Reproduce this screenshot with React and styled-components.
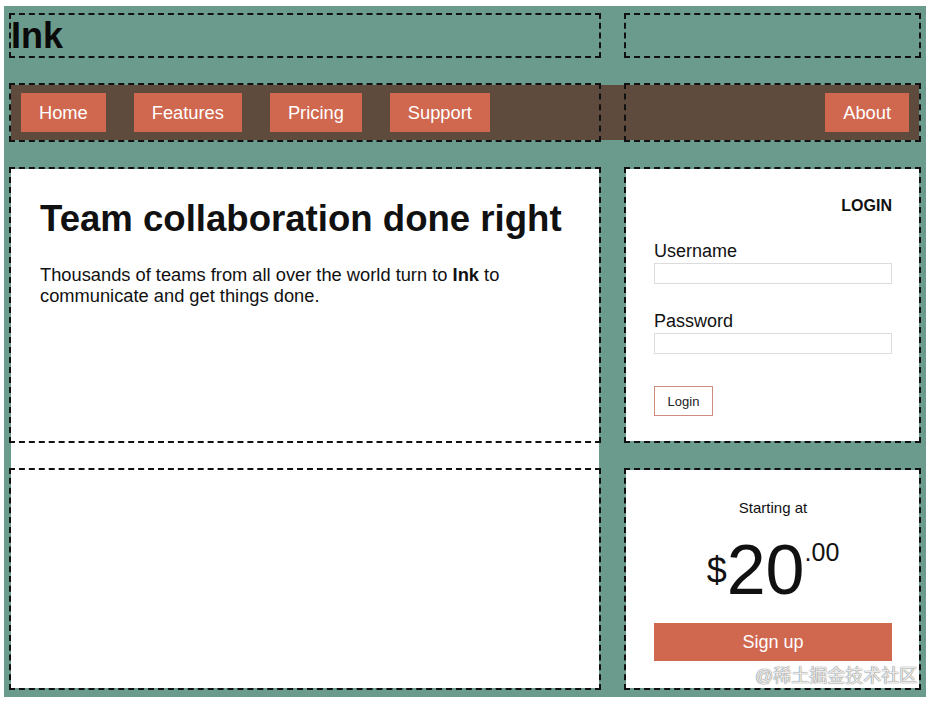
import styled, { createGlobalStyle } from 'styled-components'

const GlobalStyle = createGlobalStyle`
  html, body {
    margin: 0;
    padding: 0;
    background: #fff;
  }
  body {
    font-family: "Liberation Sans", Arial, Helvetica, sans-serif;
    color: #111;
  }
  * {
    box-sizing: border-box;
  }
`

const Page = styled.div`
  padding: 6px 8px 6px 4px;
`

const Layout = styled.div`
  position: relative;
  height: 691px;
  padding: 7px 5px;
  background: #6b9b8c;
  display: grid;
  grid-template-columns: 592px 297px;
  grid-template-rows: 45px 59px 276px 222px;
  column-gap: 23px;
  row-gap: 25px;
`

// dashed outline of every grid area, drawn over the content
const GridCell = styled.div`
  grid-row: ${props => props.$row};
  grid-column: ${props => props.$col};
  border: 2px dashed #111;
  z-index: 2;
  pointer-events: none;
`

const Brand = styled.header`
  grid-row: 1;
  grid-column: 1;
  margin: 2px;
  padding: 3px 0 0 0;
  font-size: 36px;
  font-weight: bold;
  line-height: 1;
  color: #0a0a0a;
`

const Nav = styled.nav`
  grid-row: 2;
  grid-column: 1 / -1;
  margin: 2px;
  padding: 0 10px;
  background: #5f4a3e;
  display: flex;
  align-items: center;
  gap: 28px;
`

const NavLink = styled.a`
  height: 39px;
  padding: 0 18px;
  display: flex;
  align-items: center;
  background: #d0674f;
  color: #fff;
  font-size: 18.3px;
  text-decoration: none;
  ${props => props.$end && 'margin-left: auto;'}
`

const Main = styled.main`
  grid-row: 3 / 5;
  grid-column: 1;
  margin: 2px;
  padding: 29px;
  background: #fff;
`

const Headline = styled.h1`
  margin: 0;
  font-size: 36.6px;
  line-height: 41px;
  font-weight: bold;
`

const Lead = styled.p`
  margin: 25px 0 0;
  font-size: 18.3px;
  line-height: 21px;
`

const Card = styled.section`
  grid-row: ${props => props.$row};
  grid-column: 2;
  margin: 2px;
  padding: 28px 27px 28px 28px;
  background: #fff;
  ${props => props.$center && 'text-align: center; padding-top: 29px;'}
`

const CardTitle = styled.h2`
  margin: 0;
  text-align: right;
  font-size: 16px;
  line-height: 18px;
  font-weight: bold;
`

const Field = styled.div`
  margin-top: ${props => props.$top}px;
`

const Label = styled.label`
  display: block;
  font-size: 18px;
  line-height: 21px;
`

const Input = styled.input`
  display: block;
  width: 100%;
  height: 21px;
  margin: 1px 0 0;
  border: 1px solid #dcdcdc;
  background: #fff;
`

const LoginButton = styled.button`
  margin-top: 32px;
  width: 59px;
  height: 30px;
  padding: 0;
  border: 1px solid #cf8b7b;
  background: #fff;
  color: #222;
  font-family: inherit;
  font-size: 13px;
`

const Caption = styled.div`
  font-size: 15px;
  line-height: 17px;
`

const Price = styled.div`
  margin-top: 19px;
  font-size: 70px;
  line-height: 70px;
`

const Currency = styled.span`
  font-size: 36px;
  line-height: 1;
  vertical-align: 11px;
`

const Cents = styled.span`
  font-size: 25px;
  line-height: 1;
  vertical-align: 33px;
`

const SignUp = styled.button`
  display: block;
  width: 100%;
  height: 38px;
  margin-top: 18px;
  border: 0;
  background: #d0674f;
  color: #fff;
  font-family: inherit;
  font-size: 18px;
`

const Watermark = styled.div`
  position: absolute;
  left: 751px;
  top: 655px;
  z-index: 3;
  font-family: "Liberation Sans", "Noto Sans CJK SC", sans-serif;
  font-size: 18px;
  color: rgba(255, 255, 255, 0.85);
  text-shadow: 0 0 1px #777, 0 0 1px #777;
  pointer-events: none;
`

const cells = [
  [1, 1], [1, 2],
  [2, 1], [2, 2],
  [3, 1], [3, 2],
  [4, 1], [4, 2],
]

const App = () => {
  return (
    <Page>
      <GlobalStyle />
      <Layout>
        <Brand>Ink</Brand>

        <Nav>
          <NavLink>Home</NavLink>
          <NavLink>Features</NavLink>
          <NavLink>Pricing</NavLink>
          <NavLink>Support</NavLink>
          <NavLink $end>About</NavLink>
        </Nav>

        <Main>
          <Headline>Team collaboration done right</Headline>
          <Lead>
            Thousands of teams from all over the world turn to <b>Ink</b> to
            <br />
            communicate and get things done.
          </Lead>
        </Main>

        <Card $row={3}>
          <CardTitle>LOGIN</CardTitle>
          <Field $top={26}>
            <Label>Username</Label>
            <Input type="text" />
          </Field>
          <Field $top={27}>
            <Label>Password</Label>
            <Input type="password" />
          </Field>
          <LoginButton>Login</LoginButton>
        </Card>

        <Card $row={4} $center>
          <Caption>Starting at</Caption>
          <Price>
            <Currency>$</Currency>20<Cents>.00</Cents>
          </Price>
          <SignUp>Sign up</SignUp>
        </Card>

        {cells.map(([row, col]) => (
          <GridCell key={`${row}-${col}`} $row={row} $col={col} />
        ))}

        <Watermark>@稀土掘金技术社区</Watermark>
      </Layout>
    </Page>
  )
}

export default App
